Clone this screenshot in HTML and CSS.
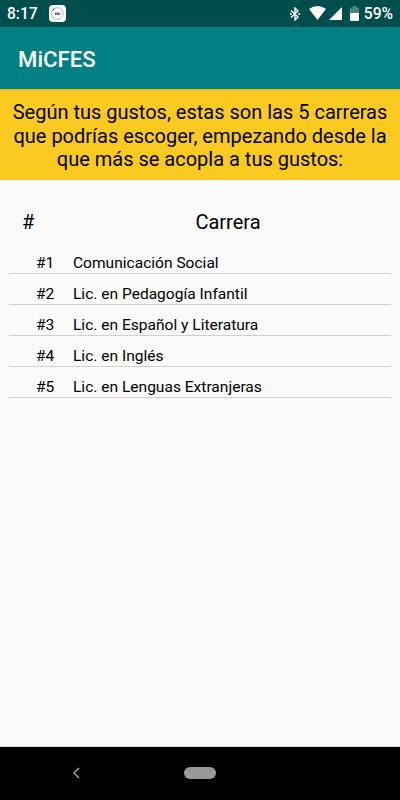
FILE: index.html
```html
<!DOCTYPE html>
<html lang="es">
<head>
    <meta charset="UTF-8">
    <meta name="viewport" content="width=device-width, initial-scale=1.0">
    <title>MiCFES</title>
    <link rel="stylesheet" href="styles.css">
</head>
<body>

    <div class="status-bar">
        <span class="time">8:17</span>
        <svg class="notif" width="17" height="17" viewBox="0 0 17 17">
            <rect width="17" height="17" rx="4" fill="#fff"/>
            <circle cx="8.5" cy="8.5" r="5.8" fill="none" stroke="#999" stroke-width="0.7"/>
            <path d="M3.5 5.5l2-2" stroke="#222" stroke-width="1"/>
            <path d="M6.5 7.5v2.5M8 10V7.5l1.2 2.5V7.5M11 7.5v2.5" fill="none" stroke="#333" stroke-width="0.8"/>
        </svg>
        <div class="status-icons">
            <svg class="bluetooth" width="10" height="14" viewBox="0 0 10 14">
                <path d="M1 3.5l7 6.5-3 3V1l3 3-7 6.5" fill="none" stroke="#fff" stroke-width="1.4"/>
                <path d="M0 6h1.5v2H0zM8.500 6H10v2H8.500z" fill="#fff"/>
            </svg>
            <svg class="wifi" width="17" height="14" viewBox="0 0 17 14">
                <path d="M0 3Q8.500-3 17 3L8.500 14z" fill="#fff"/>
            </svg>
            <svg class="signal" width="13" height="13" viewBox="0 0 13 13">
                <path d="M13 0v13H0z" fill="#fff"/>
            </svg>
            <svg class="battery" width="9" height="15" viewBox="0 0 9 15">
                <path d="M0 7V2.500q0-1 1-1h1.500V0h4v1.500H8q1 0 1 1V7z" fill="#4d8282"/>
                <path d="M0 7h9v7q0 1-1 1H1q-1 0-1-1z" fill="#fff"/>
            </svg>
            <span>59%</span>
        </div>
    </div>

    <header class="app-bar">
        <h1>MiCFES</h1>
    </header>

    <p class="message">Según tus gustos, estas son las 5 carreras<br>que podrías escoger, empezando desde la<br>que más se acopla a tus gustos:</p>

    <main class="content">
        <div class="row head">
            <span class="num">#</span>
            <span class="name">Carrera</span>
        </div>
        <div class="row"><span class="num">#1</span><span class="name">Comunicación Social</span></div>
        <div class="row"><span class="num">#2</span><span class="name">Lic. en Pedagogía Infantil</span></div>
        <div class="row"><span class="num">#3</span><span class="name">Lic. en Español y Literatura</span></div>
        <div class="row"><span class="num">#4</span><span class="name">Lic. en Inglés</span></div>
        <div class="row"><span class="num">#5</span><span class="name">Lic. en Lenguas Extranjeras</span></div>
    </main>

    <nav class="nav-bar">
        <svg class="back" width="8" height="12" viewBox="0 0 8 12">
            <path d="M7 1L2 6l5 5" fill="none" stroke="#999" stroke-width="1.6"/>
        </svg>
        <div class="home"></div>
    </nav>

</body>
</html>
```

FILE: styles.css
```css
* { box-sizing: border-box; }
body { font-family: Roboto, sans-serif; display: flex; flex-direction: column; height: 100vh; margin: 0; background-color: #fafafa; color: #000; overflow: hidden; }
.status-bar { height: 27px; display: flex; align-items: center; padding: 1px 7px 0; background-color: #004d4d; color: #fff; font-size: 15.6px; font-weight: 500; }
.notif { margin: -1px 0 0 11px; }
.status-icons { margin-left: auto; display: flex; align-items: center; }
.bluetooth { margin-top: -1px; }
.wifi { margin: -2px 0 0 9px; }
.signal { margin: -1px 0 0 3px; }
.battery { margin: -1px 5px 0 8px; }
.app-bar { height: 62px; display: flex; align-items: center; padding: 2px 18px 0; background-color: #008080; color: #fff; }
.app-bar h1 { margin: 0; font-size: 22.2px; font-weight: 500; }
.message { margin: 0; height: 91px; padding-top: 12px; background: linear-gradient(#f0bd1d, #fbca21 4px); text-align: center; font-size: 20px; line-height: 23.5px; white-space: nowrap; }
.content { flex: 1; padding: 21px 9px 0; border-bottom: 1px solid #ddd; }
.row { display: flex; height: 31px; padding-top: 10px; border-bottom: 1px solid #d0d0d0; font-size: 15.55px; line-height: 20px; }
.row .num { width: 64px; padding-left: 27px; }
.row.head { height: 42px; padding-top: 8px; border: none; font-size: 20px; line-height: 26px; }
.row.head .num { padding-left: 13px; }
.row.head .name { flex: 1; padding-right: 8px; text-align: center; }
.nav-bar { height: 53px; display: flex; align-items: center; padding: 0 0 1px 72px; background-color: #000; }
.home { width: 32px; height: 12px; margin-left: 104px; border-radius: 6px; background-color: #999; }
```
